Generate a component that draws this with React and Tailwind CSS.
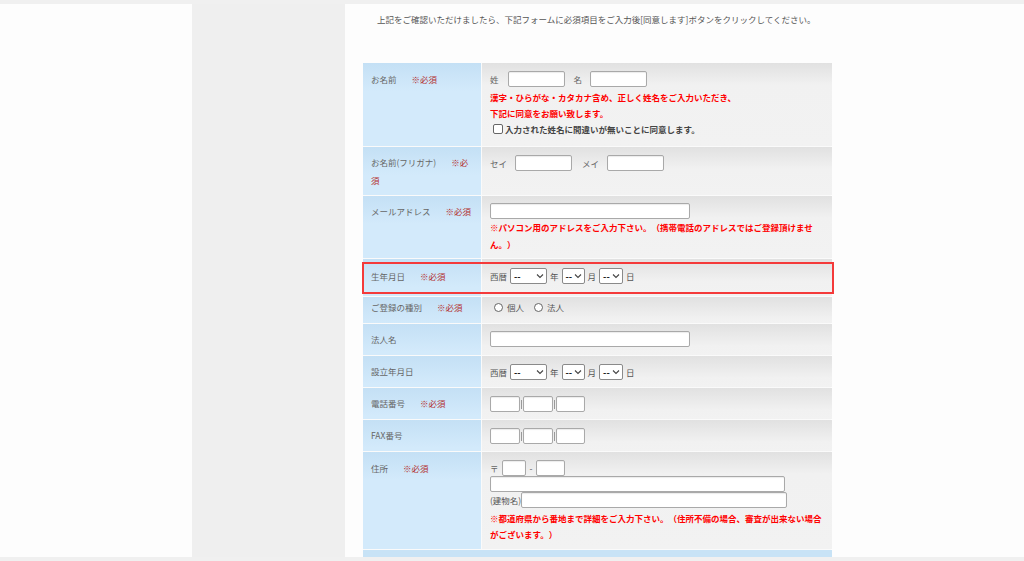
import React from "react";

const Req = () => <span className="ml-[15px] text-[#b3302f]">※必須</span>;

const Input = ({ w }) => (
  <span
    className="inline-block h-[16px] rounded-[2px] border border-[#a9a9a9] bg-white align-middle shadow-[inset_0_1px_1px_rgba(0,0,0,0.08)]"
    style={{ width: w }}
  />
);

const Select = ({ w }) => (
  <span
    className="inline-flex h-[16px] items-center justify-between rounded-[2px] border border-[#8a8a8a] bg-white pl-[3px] pr-[2px] align-middle"
    style={{ width: w }}
  >
    <span className="text-[9px] font-bold leading-none text-[#222]">--</span>
    <svg width="8" height="6" viewBox="0 0 8 6" className="shrink-0">
      <path d="M1 1.5 L4 4.5 L7 1.5" fill="none" stroke="#444" strokeWidth="1.1" />
    </svg>
  </span>
);

const DateRow = () => (
  <div className="flex items-center text-[#555]">
    <span>西暦</span>
    <span className="ml-[3px]"><Select w={37} /></span>
    <span className="ml-[3px]">年</span>
    <span className="ml-[3px]"><Select w={23} /></span>
    <span className="ml-[3px]">月</span>
    <span className="ml-[3px]"><Select w={24} /></span>
    <span className="ml-[3px]">日</span>
  </div>
);

const Label = ({ children, pt }) => (
  <div
    className="bg-[linear-gradient(#c4e0f5,#d3eafb_28px,#d3eafb)] pl-[8px] pr-[8px] leading-[18px] text-[#666]"
    style={{ paddingTop: pt }}
  >
    {children}
  </div>
);

const Value = ({ children, pt }) => (
  <div
    className="bg-[linear-gradient(#e1e1e1,#f1f1f1_22px,#f2f2f2)] pl-[8px] pr-[8px] text-[#555]"
    style={{ paddingTop: pt }}
  >
    {children}
  </div>
);

const Phone = () => (
  <div className="flex items-center">
    <Input w={30} />
    <span className="mx-[1px] inline-block h-[9px] w-px bg-[#999]" />
    <Input w={30} />
    <span className="mx-[1px] inline-block h-[9px] w-px bg-[#999]" />
    <Input w={29} />
  </div>
);

export default function App() {
  return (
    <div
      className="h-[561px] w-[1024px] overflow-hidden bg-[#f0f0f0] pt-[4px] text-[8.5px] [text-spacing-trim:space-all]"
      style={{ fontFamily: '"Noto Sans CJK JP", "Noto Sans", sans-serif' }}
    >
      <div className="flex h-[553px]">
        <div className="w-[192px] bg-[#fdfdfd]" />
        <div className="w-[153px] bg-[#efefef]" />
        <div className="flex-1 overflow-hidden bg-[#fdfdfd] pl-[18px]">
          <p className="pl-[14px] pt-[9px] leading-[12px] text-[#555]">
            上記をご確認いただけましたら、下記フォームに必須項目をご入力後[同意します]ボタンをクリックしてください。
          </p>
          <div className="mt-[38px] grid w-[468px] grid-cols-[118px_350px] gap-x-px gap-y-px bg-[#fafafa] [grid-template-rows:83px_48px_62px_37px_26px_31px_31px_31px_31px_97px_20px]">
            {/* Row 1 */}
            <Label pt={7}>お名前<Req /></Label>
            <Value pt={8}>
              <div className="flex items-center">
                <span className="text-[#666]">姓</span>
                <span className="ml-[9px]"><Input w={57} /></span>
                <span className="ml-[9px] text-[#666]">名</span>
                <span className="ml-[8px]"><Input w={57} /></span>
              </div>
              <div className="mt-[2px] font-bold leading-[16px] text-[#f00]">
                漢字・ひらがな・カタカナ含め、正しく姓名をご入力いただき、
                <br />
                下記に同意をお願い致します。
              </div>
              <div className="flex h-[16px] items-center pl-[3px] font-bold text-[#444]">
                <span className="inline-block h-[10px] w-[10px] rounded-[2px] border border-[#666] bg-white" />
                <span className="ml-[2px]">入力された姓名に間違いが無いことに同意します。</span>
              </div>
            </Value>

            {/* Row 2 */}
            <Label pt={6}>お名前(フリガナ)<Req /></Label>
            <Value pt={8}>
              <div className="flex items-center">
                <span className="text-[#666]">セイ</span>
                <span className="ml-[8px]"><Input w={57} /></span>
                <span className="ml-[10px] text-[#666]">メイ</span>
                <span className="ml-[8px]"><Input w={57} /></span>
              </div>
            </Value>

            {/* Row 3 */}
            <Label pt={6}>メールアドレス<Req /></Label>
            <Value pt={7}>
              <Input w={200} />
              <div className="font-bold leading-[17px] text-[#f00]">
                ※パソコン用のアドレスをご入力下さい。（携帯電話のアドレスではご登録頂けません。）
              </div>
            </Value>

            {/* Row 4 */}
            <div className="relative col-span-2 grid grid-cols-[118px_350px] gap-x-px">
              <Label pt={8}>生年月日<Req /></Label>
              <Value pt={9}>
                <DateRow />
              </Value>
              <div className="pointer-events-none absolute -left-[1px] -right-[2px] top-[3px] bottom-[2px] border-2 border-[#f43a3a]" />
            </div>

            {/* Row 5 */}
            <Label pt={1}>ご登録の種別<Req /></Label>
            <Value pt={4}>
              <div className="flex items-center">
                <span className="ml-[4px] inline-block h-[9px] w-[9px] rounded-full border border-[#666] bg-white" />
                <span className="ml-[4px]">個人</span>
                <span className="ml-[10px] inline-block h-[9px] w-[9px] rounded-full border border-[#666] bg-white" />
                <span className="ml-[4px]">法人</span>
              </div>
            </Value>

            {/* Row 6 */}
            <Label pt={6}>法人名</Label>
            <Value pt={7}>
              <Input w={200} />
            </Value>

            {/* Row 7 */}
            <Label pt={6}>設立年月日</Label>
            <Value pt={8}>
              <DateRow />
            </Value>

            {/* Row 8 */}
            <Label pt={6}>電話番号<Req /></Label>
            <Value pt={8}>
              <Phone />
            </Value>

            {/* Row 9 */}
            <Label pt={6}>FAX番号</Label>
            <Value pt={8}>
              <Phone />
            </Value>

            {/* Row 10 */}
            <Label pt={7}>住所<Req /></Label>
            <Value pt={8}>
              <div className="flex items-center">
                <span className="text-[#666]">〒</span>
                <span className="ml-[3px]"><Input w={24} /></span>
                <span className="ml-[4px] mr-[4px]">-</span>
                <Input w={29} />
              </div>
              <div className="flex">
                <Input w={295} />
              </div>
              <div className="flex items-center">
                <span>(建物名)</span>
                <Input w={266} />
              </div>
              <div className="mt-[2px] font-bold leading-[16px] text-[#f00]">
                ※都道府県から番地まで詳細をご入力下さい。（住所不備の場合、審査が出来ない場合がございます。）
              </div>
            </Value>

            {/* Row 11 */}
            <div className="col-span-2 bg-[#c8e3f6]" />
          </div>
        </div>
      </div>
    </div>
  );
}
